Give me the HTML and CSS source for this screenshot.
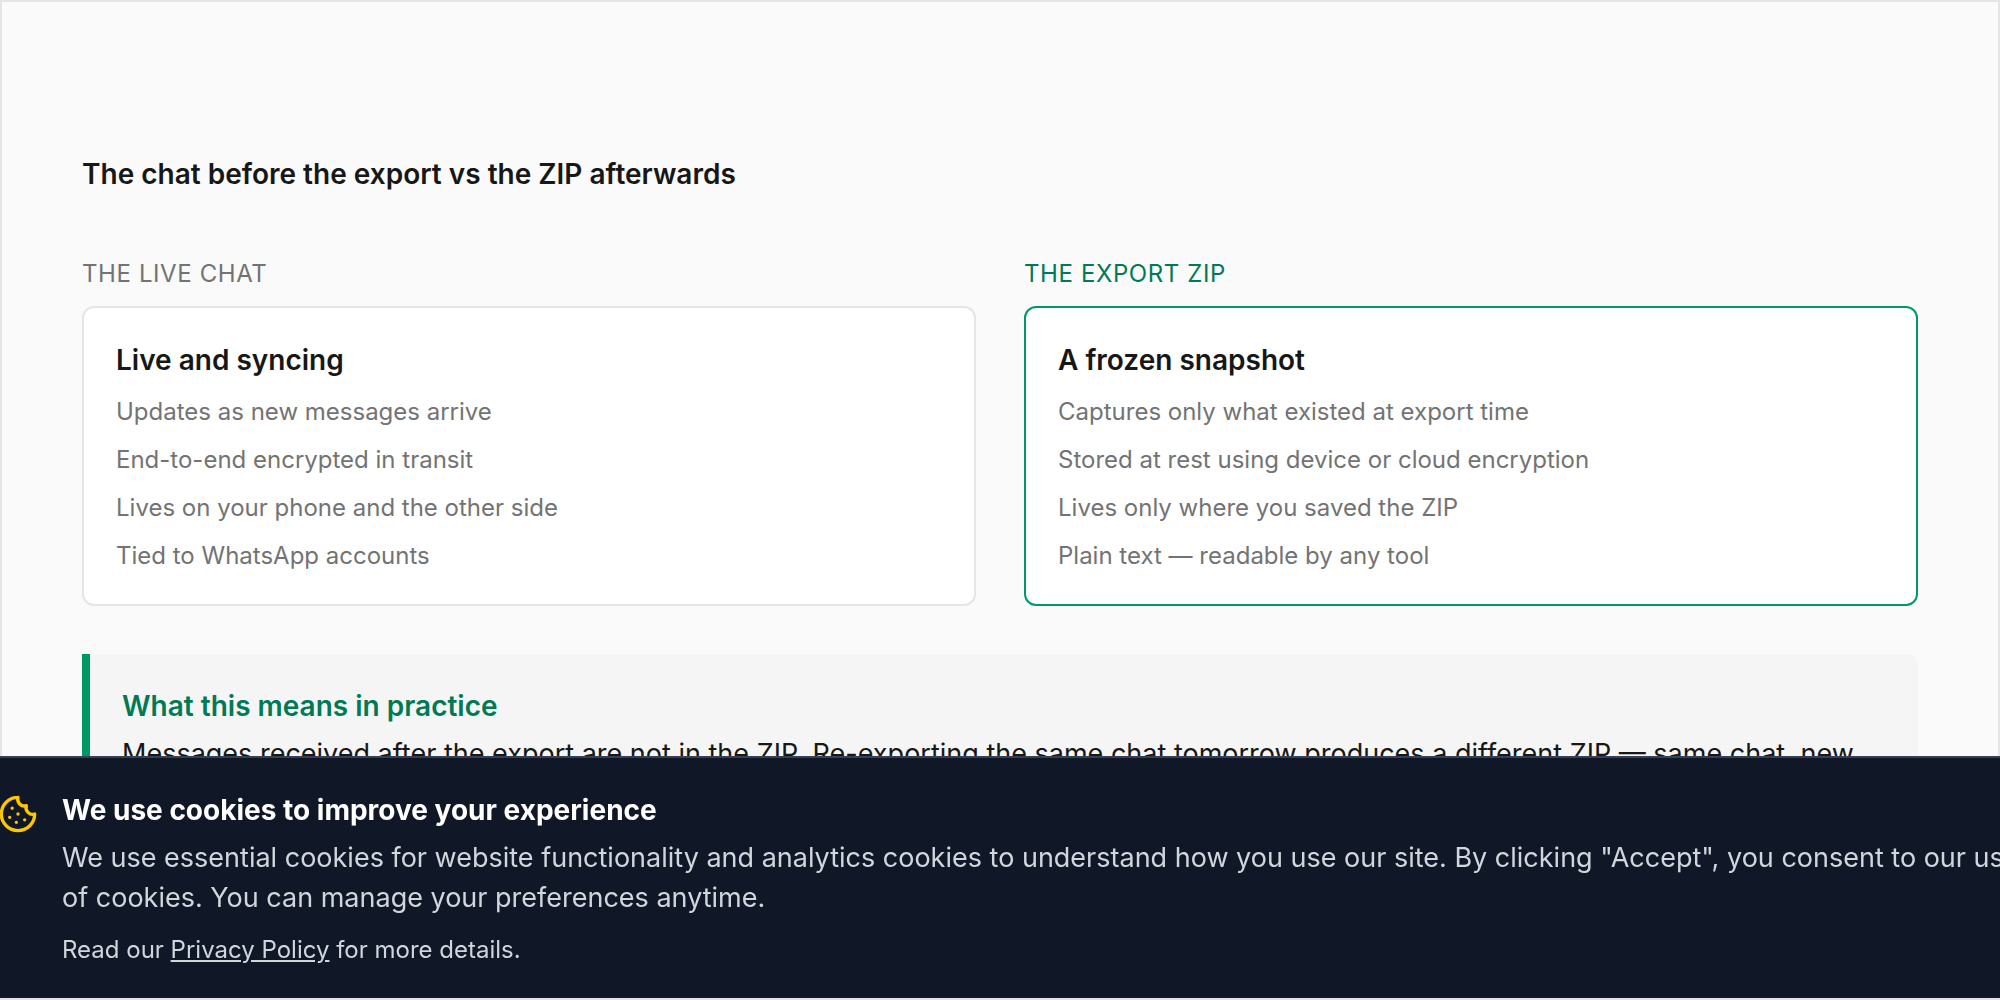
FILE: index.html
```html
<!DOCTYPE html>
<html lang="en">
<head>
<meta charset="utf-8">
<title>The chat before the export vs the ZIP afterwards</title>
<link rel="stylesheet" href="styles.css">
</head>
<body>
<main class="panel">
  <h2 class="title">The chat before the export vs the ZIP afterwards</h2>
  <div class="compare">
    <section class="column">
      <p class="label">THE LIVE CHAT</p>
      <div class="card">
        <h3 class="heading">Live and syncing</h3>
        <ul class="points">
          <li>Updates as new messages arrive</li>
          <li>End-to-end encrypted in transit</li>
          <li>Lives on your phone and the other side</li>
          <li>Tied to WhatsApp accounts</li>
        </ul>
      </div>
    </section>
    <section class="column column-accent">
      <p class="label">THE EXPORT ZIP</p>
      <div class="card">
        <h3 class="heading">A frozen snapshot</h3>
        <ul class="points">
          <li>Captures only what existed at export time</li>
          <li>Stored at rest using device or cloud encryption</li>
          <li>Lives only where you saved the ZIP</li>
          <li>Plain text — readable by any tool</li>
        </ul>
      </div>
    </section>
  </div>
  <aside class="callout">
    <h3 class="callout-title">What this means in practice</h3>
    <p class="callout-text">Messages received after the export are not in the ZIP. Re-exporting the same chat tomorrow produces a different ZIP — same chat, new</p>
  </aside>
</main>
<div class="cookie-bar" role="region" aria-label="Cookie consent">
  <div class="cookie-inner">
    <svg class="cookie-icon" viewBox="0 0 24 24" fill="none" stroke="currentColor" stroke-width="2" stroke-linecap="round" stroke-linejoin="round" aria-hidden="true">
      <path d="M12 2a10 10 0 1 0 10 10 4 4 0 0 1-5-5 4 4 0 0 1-5-5"/>
      <path d="M8.500 8.500v.01M16 15.500v.01M12 12v.01M11 17v.01M7 14v.01"/>
    </svg>
    <div class="cookie-copy">
      <h3 class="cookie-title">We use cookies to improve your experience</h3>
      <p class="cookie-text">We use essential cookies for website functionality and analytics cookies to understand how you use our site. By clicking "Accept", you consent to our use of cookies. You can manage your preferences anytime.</p>
      <p class="cookie-more">Read our <a class="cookie-link" href="#privacy">Privacy Policy</a> for more details.</p>
    </div>
  </div>
</div>
</body>
</html>
```
FILE: styles.css
```css
* { box-sizing: border-box; margin: 0; padding: 0; }
html { height: 100%; }
body {
  min-height: 100%;
  background: #fafafa;
  color: #171717;
  font-family: Inter, "Liberation Sans", sans-serif;
  font-size: 27px;
  line-height: 40px;
  overflow: hidden;
}
h2, h3 { font-size: 28px; font-weight: 600; }
.panel {
  min-height: 100vh;
  padding: 152px 80px 80px;
  border: 2px solid #e5e5e5;
}
.title { margin-bottom: 64px; }
.compare {
  display: grid;
  grid-template-columns: 1fr 1fr;
  gap: 48px;
}
.column { display: flex; flex-direction: column; gap: 16px; }
.label {
  color: #737373;
  font-size: 24px;
  line-height: 32px;
  letter-spacing: 0.025em;
}
.card {
  flex: 1;
  padding: 32px;
  background: #fff;
  border: 2px solid #e5e5e5;
  border-radius: 12px;
}
.column-accent .label { color: #007a55; }
.column-accent .card { border-color: #009966; }
.points {
  display: flex;
  flex-direction: column;
  gap: 16px;
  margin-top: 16px;
  list-style: none;
  color: #737373;
  font-size: 24px;
  line-height: 32px;
}
.callout {
  margin-top: 48px;
  padding: 32px;
  background: #f5f5f5;
  border-left: 8px solid #009966;
  border-radius: 0 12px 12px 0;
}
.callout-title { margin-bottom: 8px; color: #007a55; }
.cookie-bar {
  position: fixed;
  right: 0;
  bottom: 2px;
  left: 0;
  padding: 32px 0;
  background: #101828;
  border-top: 2px solid #364153;
  color: #fff;
}
/* The row is a little wider than the bar and bleeds past both edges. */
.cookie-inner {
  display: flex;
  align-items: flex-start;
  gap: 24px;
  margin: 0 -40px 0 -2px;
}
.cookie-icon {
  flex: none;
  width: 40px;
  height: 40px;
  margin-top: 4px;
  color: #fdc700;
}
.cookie-copy { flex: 1; color: #d1d5dc; }
.cookie-title { color: #fff; font-weight: 700; }
.cookie-text { margin-top: 8px; }
.cookie-more { margin-top: 16px; font-size: 24px; line-height: 32px; }
.cookie-link { color: inherit; text-decoration: underline; }
```
